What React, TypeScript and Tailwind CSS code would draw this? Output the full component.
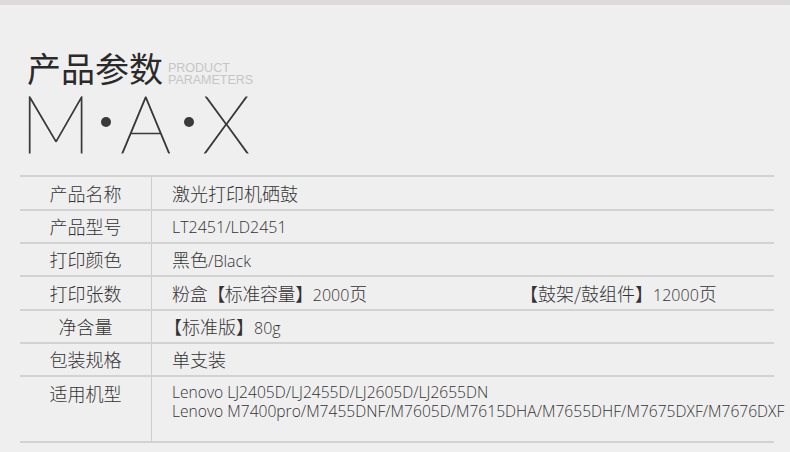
const lat = { fontFamily: '"Open Sans", "Noto Sans CJK SC", sans-serif' };

const rows: { label: string; value: React.ReactNode; h: string }[] = [
  { label: '产品名称', value: '激光打印机硒鼓', h: 'h-[34px]' },
  { label: '产品型号', value: <span className="text-[16px]" style={lat}>LT2451/LD2451</span>, h: 'h-[33px]' },
  {
    label: '打印颜色',
    value: (
      <span>
        黑色<span className="text-[16px]" style={lat}>/Black</span>
      </span>
    ),
    h: 'h-[33px]',
  },
  {
    label: '打印张数',
    value: (
      <div className="flex">
        <span className="w-[356px] tracking-[-0.4px]">
          粉盒【标准容量】<span className="text-[16px] tracking-normal" style={lat}>2000</span>页
        </span>
        <span className="-ml-[8px]">
          【鼓架/鼓组件】<span className="text-[16px]" style={lat}>12000</span>页
        </span>
      </div>
    ),
    h: 'h-[34px]',
  },
  {
    label: '净含量',
    value: (
      <span className="-ml-[8px]">
        【标准版】<span className="text-[16px]" style={lat}>80g</span>
      </span>
    ),
    h: 'h-[33px]',
  },
  { label: '包装规格', value: '单支装', h: 'h-[33px]' },
];

export default function App() {
  return (
    <div
      className="w-[790px] h-[452px] bg-[#efefef] overflow-hidden text-[#333]"
      style={{ fontFamily: '"Noto Sans CJK SC", "Noto Sans", sans-serif' }}
    >
      <div className="h-[5px] bg-[#dcdadb]" />

      {/* title */}
      <div className="pl-[27px] pt-[41px]">
        <div className="flex items-end">
          <h1 className="text-[34px] leading-[44px] font-normal text-[#2a2a2a]">产品参数</h1>
          <div
            className="ml-[5px] mb-[4px] text-[12.5px] leading-[12px] text-[#c6c6c6]"
            style={{ fontFamily: '"Liberation Sans", sans-serif' }}
          >
            <div>PRODUCT</div>
            <div>PARAMETERS</div>
          </div>
        </div>
        <div
          className="-ml-[7px] flex items-center h-[64px] text-[#3a3a3a] text-[80px] leading-none font-extralight [-webkit-text-stroke:0.9px_#3a3a3a]"
          style={{ fontFamily: 'Lato, Inter, "Liberation Sans", sans-serif' }}
        >
          <span>M</span>
          <span className="ml-[10px] mr-[9px] w-[10px] h-[10px] rounded-full bg-[#3a3a3a]" />
          <span>A</span>
          <span className="ml-[13px] mr-[8px] w-[10px] h-[10px] rounded-full bg-[#3a3a3a]" />
          <span>X</span>
        </div>
      </div>

      {/* table */}
      <div className="ml-[20px] mt-[21px] w-[754px] border-b-2 border-[#d2d2d2] font-light">
        {rows.map((r) => (
          <div key={r.label} className={`flex border-t-2 border-[#d2d2d2] ${r.h}`}>
            <div className="w-[132px] shrink-0 border-r border-[#cdcdcd] flex items-center justify-center text-[18px]">
              {r.label}
            </div>
            <div className="flex-1 min-w-0 pl-[20px] flex items-center text-[18px]">{r.value}</div>
          </div>
        ))}
        <div className="flex border-t-2 border-[#d2d2d2] h-[66px]">
          <div className="w-[132px] shrink-0 border-r border-[#cdcdcd] flex justify-center pt-[4px] text-[18px] leading-[24px]">
            适用机型
          </div>
          <div
            className="flex-1 min-w-0 pl-[20px] pt-[6px] text-[15.6px] leading-[19px] whitespace-nowrap"
            style={lat}
          >
            <div>Lenovo LJ2405D/LJ2455D/LJ2605D/LJ2655DN</div>
            <div>Lenovo M7400pro/M7455DNF/M7605D/M7615DHA/M7655DHF/M7675DXF/M7676DXF</div>
          </div>
        </div>
      </div>
    </div>
  );
}
